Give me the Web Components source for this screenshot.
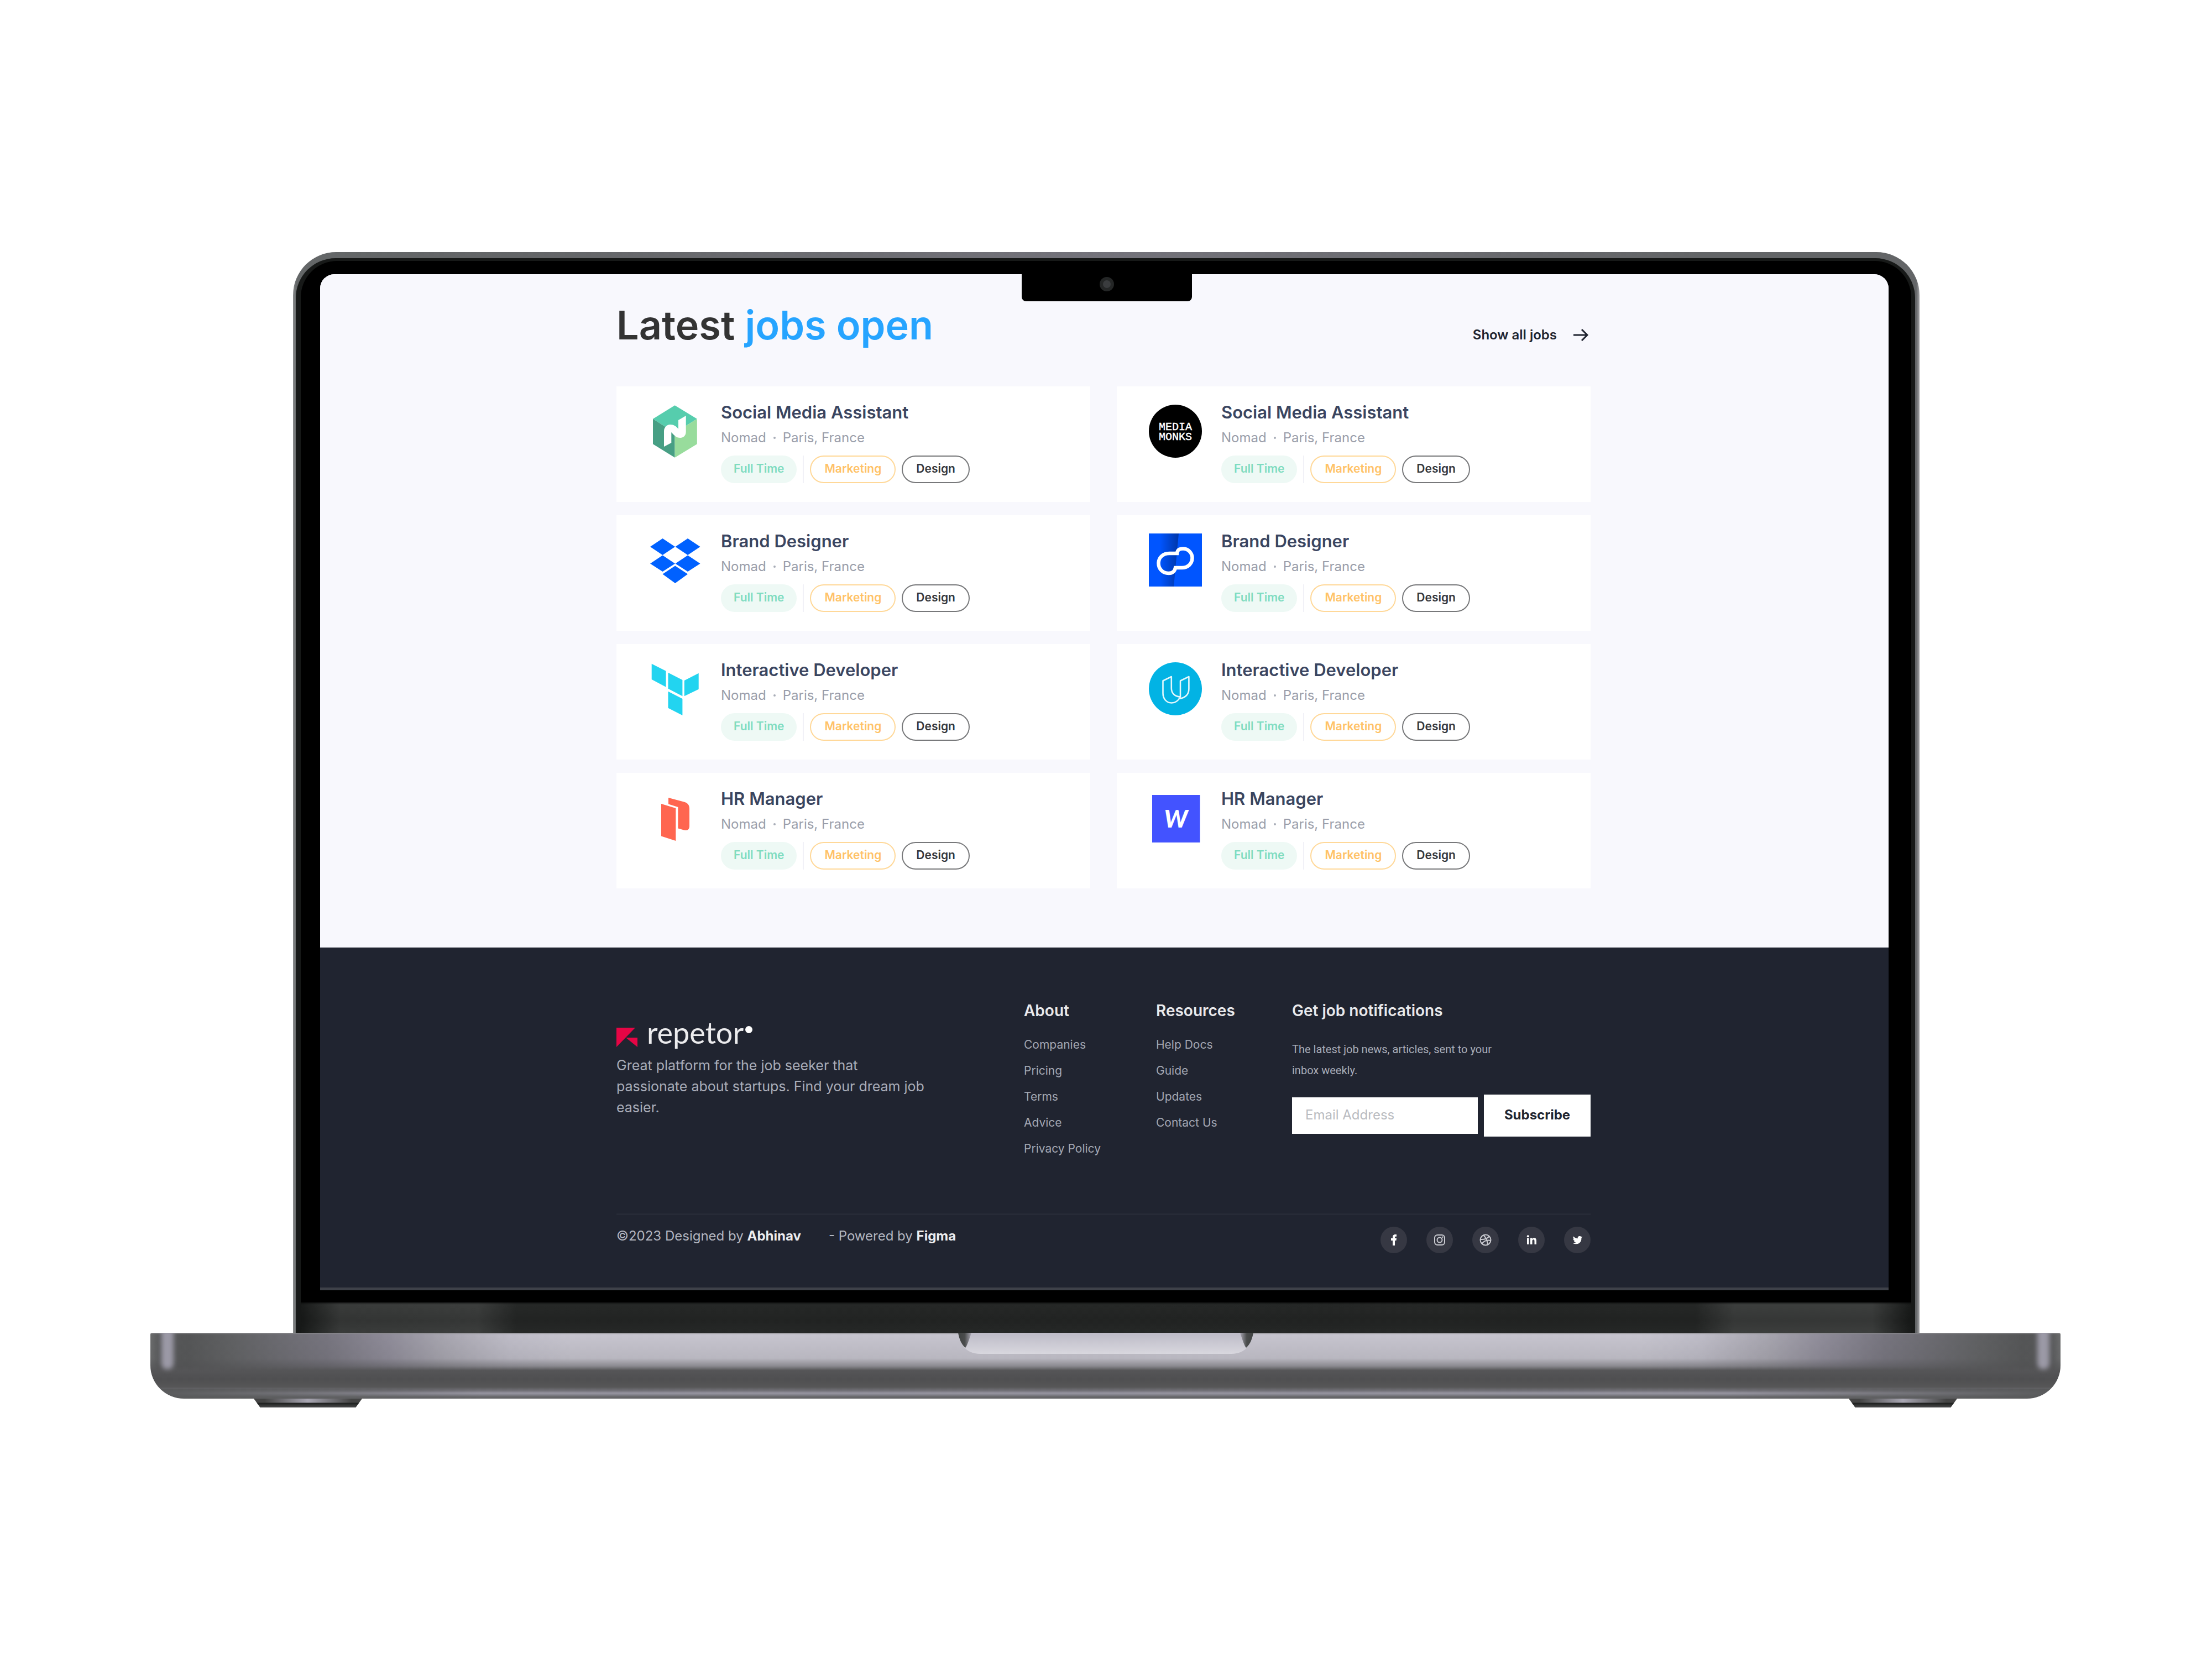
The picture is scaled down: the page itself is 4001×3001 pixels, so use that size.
<!DOCTYPE html>
<html lang="en">
<head>
<meta charset="utf-8">
<title>Latest jobs open</title>
<style>
  body { margin: 0; background: #fff; font-family: Inter, "Liberation Sans", sans-serif; }
</style>
</head>
<body>
<laptop-frame>
  <jobs-section>
    <job-card role-name="Social Media Assistant" logo="nomad"></job-card>
    <job-card role-name="Social Media Assistant" logo="mediamonks"></job-card>
    <job-card role-name="Brand Designer" logo="dropbox"></job-card>
    <job-card role-name="Brand Designer" logo="loop"></job-card>
    <job-card role-name="Interactive Developer" logo="terraform"></job-card>
    <job-card role-name="Interactive Developer" logo="udacity"></job-card>
    <job-card role-name="HR Manager" logo="packer"></job-card>
    <job-card role-name="HR Manager" logo="webflow"></job-card>
  </jobs-section>
  <site-footer></site-footer>
</laptop-frame>

<script>
const LOGOS = {
  nomad: `<path fill="#56cdad" d="M47.6 1.3 87.8 25.7 47.6 51 8 25.7Z"/>
    <path fill="#479f84" d="M8 25.7 47.6 51V95.7L8 71.3Z"/>
    <path fill="#98dc9c" d="M87.8 25.7 47.6 51V95.7L87.8 71.3Z"/>
    <path fill="#fff" d="M28 76V48C28 41 33 36 39 36C46 36 50 39 54 44V28L67.700 20V49C67.700 56 63 60 57.500 60C50 60 46 55 41.300 50V69Z"/>`,
  dropbox: `<path fill="#0061ff" d="M25.500 9 48 24 25.500 39 3 24ZM71 9 93.500 24 71 39 48.500 24ZM25.500 39.500 48 54.500 25.500 69 3 54.500ZM71 39.500 93.500 54.500 71 69 48.500 54.500ZM48.200 58.500 71 73.500 48.200 90 25.500 73.500Z"/>`,
  terraform: `<path fill="#22d4f0" d="M5.700 2.700 31.500 15.700V44.700L5.700 31ZM35.500 18.700 61.400 32V61.300L35.500 47.700ZM90.700 19.700 64.800 33V61.300L90.700 48.700ZM35.500 52.700 61.400 66V96L35.500 82.700Z"/>`,
  packer: `<path fill="#ff6650" d="M23 23 49.300 31V90L23 81.500ZM36 12 64 19.500C71 21.500 74 25 74 32V63C74 70 70 72 64 70.500L53.400 67.500V29L36 23.500Z"/>`,
  mediamonks: `<circle cx="48" cy="48" r="48"/>
    <g fill="#fff" stroke="#fff" stroke-width=".5" text-anchor="middle" font-family="Liberation Mono, monospace" font-size="20">
      <text x="48" y="46">MEDIA</text><text x="48" y="64">MONKS</text></g>`,
  loop: `<defs><linearGradient id="fold"><stop offset="0" stop-color="#0055ff"/><stop offset="1" stop-color="#0036a8"/></linearGradient></defs>
    <path fill="#0055ff" d="M0 0H96V96H0Z"/><path fill="url(#fold)" d="M20 0H54L45 96H20Z"/>
    <path fill="none" stroke="#fff" stroke-width="6.500" d="M51 36H37C25 36 17.500 44 17.500 54C17.500 64 25 72 36 72C43 72 47 68 48 62H60C71 62 78.500 54 78.500 44.500C78.500 35 71 27.500 62 27.500C55 27.500 51.500 30 51 36Z"/>`,
  udacity: `<circle cx="48" cy="48" r="48" fill="#02b3e4"/>
    <path fill="none" stroke="#e2f7fc" stroke-width="2.600" stroke-linejoin="round" d="M25.500 33.500 40.800 26V47C40.800 56 47 62 57 62.500C53 70 48 73.500 41 73.500C32 73.500 25.500 66 25.500 56ZM57 62.500V33.500L72.400 26V48C72.400 57 67 64 55 66"/>`,
  webflow: `<path fill="#4353ff" d="M6 7H92.500V93H6Z"/>
    <text x="49" y="66" text-anchor="middle" fill="#fff" font-family="Lato, sans-serif" font-style="italic" font-weight="900" font-size="44">W</text>`
};

const SOCIAL = {
  Facebook: `<path fill="#fff" d="M22 34V25H19V21H22V18.500C22 15.500 24 14 26.500 14H29V17.700H27.500C26.300 17.700 26 18.300 26 19.300V21H29L28.500 25H26V34Z"/>`,
  Instagram: `<g fill="none" stroke="#c9cad0" stroke-width="2"><rect x="15" y="15" width="18" height="18" rx="5"/><circle cx="24" cy="24" r="4.500"/></g><circle cx="29.300" cy="18.700" r="1.300" fill="#c9cad0"/>`,
  Dribbble: `<g fill="none" stroke="#c9cad0" stroke-width="2"><circle cx="24" cy="24" r="9.500"/><path d="M20.500 15.500C25 20 27.500 26 28 32.500M14.500 23C21 23.500 27 21.500 30.500 17.500M17.500 31C20.500 25.500 27 23.500 33.500 25"/></g>`,
  LinkedIn: `<path fill="#fff" d="M16 20.500H19.500V32H16ZM22 20.500H25.300V22C26.200 20.700 27.500 20.200 29 20.200C32 20.200 33 22.300 33 25.500V32H29.500V26C29.500 24.300 29 23.200 27.700 23.200C26.200 23.200 25.500 24.300 25.500 26V32H22Z"/><circle cx="17.800" cy="17.200" r="2" fill="#fff"/>`,
  Twitter: `<path fill="#fff" d="M33 17.500C32.300 17.900 31.600 18.100 30.900 18.200C30.300 17.500 29.300 17 28.300 17C25.900 17 24.200 19 24.700 21.300C21.500 21.200 18.900 19.800 17 17.400C16 19.300 16.600 21.200 18.100 22.300C17.500 22.300 17 22.100 16.500 21.800C16.500 23.700 17.700 25.200 19.400 25.600C18.900 25.800 18.300 25.800 17.800 25.700C18.300 27.200 19.600 28.200 21.200 28.200C19.700 29.400 17.800 29.900 15.900 29.700C21 33 32 32 31.400 20.200C32 19.700 32.600 19 33 17.500Z"/>`
};

class LaptopFrame extends HTMLElement {
  constructor() {
    super();
    this.attachShadow({ mode: 'open' }).innerHTML = `
    <style>
      :host { display: block; padding: 456px 274px 455px 272px; }
      .lid { margin: 0 255px 0 258px; padding: 11px 8px 0 5px; border-radius: 78px 78px 0 0;
        background: linear-gradient(90deg, #8b8d8e 0, #646768 6px, #636567 400px, #74737b 50%, #636567 calc(100% - 400px), #636567 calc(100% - 6px), #a2a2a5 100%); }
      .rim { padding: 5px 7px 0 9px; border-radius: 72px 72px 0 0; background: #171918; }
      .glass { position: relative; padding: 24px 41px 22px 35px; border-radius: 66px 66px 0 0; background: #000; }
      .screen { overflow: hidden; border-radius: 26px 26px 0 0; border-bottom: 5px solid #3e4149; background: #f8f8fd; }
      .notch { position: absolute; top: 20px; left: 50%; width: 308px; height: 53px; margin-left: -153px;
        border-radius: 0 0 8px 8px; background: #000; display: grid; place-items: center; }
      .notch i { width: 14px; height: 14px; border-radius: 50%; border: 6px solid #242626; background: #3a3c3e; margin-top: -10px; }
      .hinge { height: 55px; background:
        linear-gradient(180deg, rgba(0,0,0,.5) 0, rgba(0,0,0,0) 4px, rgba(0,0,0,.12) 60%, rgba(0,0,0,0) 100%),
        linear-gradient(90deg, #181a19 0, #393b3a 70px, #3c3e3d 320px, #262827 390px, #252726 calc(100% - 390px), #3c3e3d calc(100% - 320px), #3c3e3d calc(100% - 70px), #181a19 100%); }
      .base { position: relative; height: 119px; border-radius: 3px 3px 61px 61px / 3px 3px 60px 60px; overflow: hidden; background:
        linear-gradient(180deg, #8a8a8d 0, rgba(140,140,143,0) 3px),
        linear-gradient(90deg, #58595a 0, rgba(88,89,90,0) 600px, rgba(88,89,90,0) calc(100% - 600px), #58595a 100%) 0 100% / 100% 18px no-repeat,
        linear-gradient(180deg, rgba(80,80,82,0) 0, rgba(80,80,82,.12) 46px, rgba(80,80,82,.5) 60px, #555557 68px, #4f4f51 84px, #565657 98px, #74737a 105px, #9795a1 109px, #84838c 112px, #656568 116px, #656568 119px),
        linear-gradient(90deg, #6b6c6d 0, #58595a 16px, #545556 66px, #606163 150px, #77757f 320px, #8f8c99 430px, #a8a6b0 530px, #bfbdc8 650px, #c7c5cf 760px, #c7c5cf calc(100% - 760px), #bfbdc8 calc(100% - 650px), #a8a6b0 calc(100% - 530px), #8f8c99 calc(100% - 430px), #77757f calc(100% - 320px), #606163 calc(100% - 150px), #545556 calc(100% - 66px), #58595a calc(100% - 16px), #6b6c6d 100%); }
      .glint { position: absolute; top: -8px; width: 22px; height: 74px; border-radius: 0 0 10px 10px; background: #9b99a6; filter: blur(4px); }
      .glint.l { left: 20px; } .glint.r { right: 20px; }
      .lip { position: absolute; top: 0; left: 50%; width: 534px; height: 38px; margin-left: -267px; }
      .feet { display: flex; justify-content: space-between; padding: 0 187px; height: 16px; }
      .feet i { width: 196px; clip-path: polygon(0 0, 100% 0, 94% 100%, 6% 100%); background:
        linear-gradient(180deg, transparent 0 7px, #1d1f1e 8px, #4a4a4b 100%),
        linear-gradient(90deg, #444 10%, #a9a7b3 50%, #444 90%); }
    </style>
    <div class="lid"><div class="rim">
      <div class="glass">
        <div class="screen"><slot></slot></div>
        <div class="notch"><i></i></div>
      </div>
      <div class="hinge"></div>
    </div></div>
    <div class="base">
      <div class="glint l"></div><div class="glint r"></div>
      <svg class="lip" viewBox="0 0 534 38" aria-hidden="true">
        <defs>
          <linearGradient id="lip" x2="0" y2="1"><stop offset="0" stop-color="#bdbbc7"/><stop offset="1" stop-color="#d8d7de"/></linearGradient>
          <linearGradient id="edge"><stop offset="0" stop-color="#3f4241"/><stop offset=".5" stop-color="#4a4c4c"/><stop offset="1" stop-color="#a5a3ae"/></linearGradient>
          <linearGradient id="edge2" x1="1" x2="0"><stop offset="0" stop-color="#3f4241"/><stop offset=".5" stop-color="#4a4c4c"/><stop offset="1" stop-color="#a5a3ae"/></linearGradient>
        </defs>
        <path fill="url(#lip)" d="M0 0H534C531 18 522 38 494 38H40C12 38 3 18 0 0Z"/>
        <path fill="url(#edge)" d="M0 0H24C20 12 16 24 13 27C5 20 2 10 0 0Z"/>
        <path fill="url(#edge2)" d="M534 0H510C514 12 518 24 521 27C529 20 532 10 534 0Z"/>
      </svg>
    </div>
    <div class="feet"><i></i><i></i></div>`;
  }
}

class JobsSection extends HTMLElement {
  constructor() {
    super();
    this.attachShadow({ mode: 'open' }).innerHTML = `
    <style>
      :host { display: block; padding: 49px 539px 107px 536px; background: #f8f8fd; }
      header { display: flex; justify-content: space-between; align-items: flex-end; margin-bottom: 68px; }
      h2 { margin: 0; font-size: 72px; line-height: 86px; font-weight: 600; color: #333; }
      h2 span { color: #26a4ff; }
      a { display: flex; align-items: center; gap: 25px; font-size: 24px; line-height: 50px; font-weight: 600; color: #202430; text-decoration: none; }
      svg { width: 36px; height: 36px; }
      .grid { display: grid; grid-template-columns: 1fr 1fr; gap: 24px 48px; }
    </style>
    <header>
      <h2>Latest <span>jobs open</span></h2>
      <a href="#jobs">Show all jobs
        <svg viewBox="0 0 36 36" fill="none" stroke="#202430" stroke-width="3" aria-hidden="true"><path d="M5 18H30M20 8 30 18 20 28"/></svg></a>
    </header>
    <div class="grid"><slot></slot></div>`;
  }
}

class JobCard extends HTMLElement {
  connectedCallback() {
    this.attachShadow({ mode: 'open' }).innerHTML = `
    <style>
      :host { display: flex; align-items: flex-start; gap: 35px; padding: 33px 59px 34px 58px; background: #fff; }
      svg { width: 96px; height: 96px; flex: none; }
      .text { display: flex; flex-direction: column; gap: 18px; }
      h3, p { margin: 0; line-height: 28px; }
      h3 { font-size: 31px; font-weight: 600; color: #3a4560; }
      p { display: flex; align-items: center; gap: 13px; font-size: 24px; color: #9a9eaa; }
      p i { width: 4px; height: 4px; border-radius: 50%; background: #a8adb7; }
      .tags { display: flex; gap: 11px; }
      .tags span { box-sizing: border-box; height: 50px; padding: 0 24px; border: 2px solid; border-radius: 25px;
        font-size: 21px; line-height: 43px; font-weight: 600; }
      .tags .time { padding: 0 21px; border-color: #eef9f5; background: #eef9f5; color: #7fdcc0; }
      .tags .mk { border-color: #ffd898; color: #ffc266; }
      .tags .ds { border-color: #77787a; color: #34363b; }
      .tags hr { width: 2px; margin: 0; border: 0; background: #f1f1f7; }
    </style>
    <svg viewBox="0 0 96 96" aria-hidden="true">${LOGOS[this.getAttribute('logo')]}</svg>
    <div class="text">
      <h3>${this.getAttribute('role-name')}</h3>
      <p><span>Nomad</span><i></i><span>Paris, France</span></p>
      <div class="tags"><span class="time">Full Time</span><hr><span class="mk">Marketing</span><span class="ds">Design</span></div>
    </div>`;
  }
}

class LinkColumn extends HTMLElement {
  connectedCallback() {
    const links = this.getAttribute('links').split('|').map(t => `<a href="#">${t}</a>`).join('');
    this.attachShadow({ mode: 'open' }).innerHTML = `
    <style>
      :host { display: block; }
      h4 { margin: 0 0 28px; font-size: 28px; line-height: 40px; font-weight: 600; color: #e9e9eb; }
      nav { display: flex; flex-direction: column; gap: 19px; }
      a { font-size: 21px; line-height: 28px; color: #a4a8b4; text-decoration: none; }
    </style>
    <h4>${this.getAttribute('heading')}</h4><nav>${links}</nav>`;
  }
}

class SiteFooter extends HTMLElement {
  constructor() {
    super();
    const social = Object.entries(SOCIAL).map(([n, p]) =>
      `<a href="#" aria-label="${n}"><svg viewBox="0 0 48 48">${p}</svg></a>`).join('');
    this.attachShadow({ mode: 'open' }).innerHTML = `
    <style>
      :host { display: block; padding: 94px 539px 62px 536px; background: #202430; color: #a9adb9; }
      .cols { display: grid; grid-template-columns: minmax(0, 737fr) minmax(0, 239fr) minmax(0, 246fr) minmax(0, 540fr); }
      .brand { padding-top: 34px; }
      .logo { display: flex; align-items: flex-end; margin-bottom: 14px; }
      .mark { width: 38px; height: 35px; margin-right: 17px; }
      .name { font-family: Lato, sans-serif; font-size: 54px; line-height: 52px; color: #ececee; }
      .dot { align-self: flex-start; width: 13px; height: 13px; margin: 14px 0 0 3px; border-radius: 50%; background: #fff; }
      p { margin: 0; font-size: 25px; line-height: 38px; }
      h4 { margin: 0 0 31px; font-size: 28px; line-height: 40px; font-weight: 600; color: #e9e9eb; }
      .news p { margin-bottom: 25px; font-family: Roboto, sans-serif; font-size: 20px; }
      form { display: flex; align-items: center; gap: 11px; }
      input { box-sizing: border-box; flex: 1; min-width: 0; height: 66px; padding: 0 24px 3px; border: 0; border-radius: 0; background: #fff; font: 24px Inter, sans-serif; color: #202430; }
      input::placeholder { color: #b9bbc0; opacity: 1; }
      button { width: 193px; height: 76px; padding: 0 0 3px; border: 0; background: #fff; font: 700 24px Inter, sans-serif; color: #202430; }
      hr { height: 3px; margin: 103px 0 21px; border: 0; background: #272b37; }
      .end { display: flex; justify-content: space-between; align-items: flex-start; }
      .credit { display: flex; gap: 50px; font-size: 24px; line-height: 34px; color: #b4b7c1; }
      b { font-weight: 700; color: #ededef; }
      .social { display: flex; gap: 35px; }
      .social a { width: 48px; height: 48px; border-radius: 50%; background: #363843; }
      .social svg { display: block; width: 48px; height: 48px; }
    </style>
    <div class="cols">
      <div class="brand">
        <div class="logo">
          <svg class="mark" viewBox="0 0 38 35" aria-hidden="true"><path fill="#e60545" d="M0 0H34L0 35ZM17 18H38V35Z"/></svg>
          <span class="name">repetor</span><i class="dot"></i>
        </div>
        <p>Great platform for the job seeker that<br>passionate about startups. Find your dream job<br>easier.</p>
      </div>
      <link-column heading="About" links="Companies|Pricing|Terms|Advice|Privacy Policy"></link-column>
      <link-column heading="Resources" links="Help Docs|Guide|Updates|Contact Us"></link-column>
      <div class="news">
        <h4>Get job notifications</h4>
        <p>The latest job news, articles, sent to your<br>inbox weekly.</p>
        <form><input type="email" placeholder="Email Address" aria-label="Email Address"><button type="button">Subscribe</button></form>
      </div>
    </div>
    <hr>
    <div class="end">
      <div class="credit"><span>©2023 Designed by <b>Abhinav</b></span><span>- Powered by <b>Figma</b></span></div>
      <div class="social">${social}</div>
    </div>`;
  }
}

customElements.define('laptop-frame', LaptopFrame);
customElements.define('jobs-section', JobsSection);
customElements.define('job-card', JobCard);
customElements.define('link-column', LinkColumn);
customElements.define('site-footer', SiteFooter);
</script>
</body>
</html>
